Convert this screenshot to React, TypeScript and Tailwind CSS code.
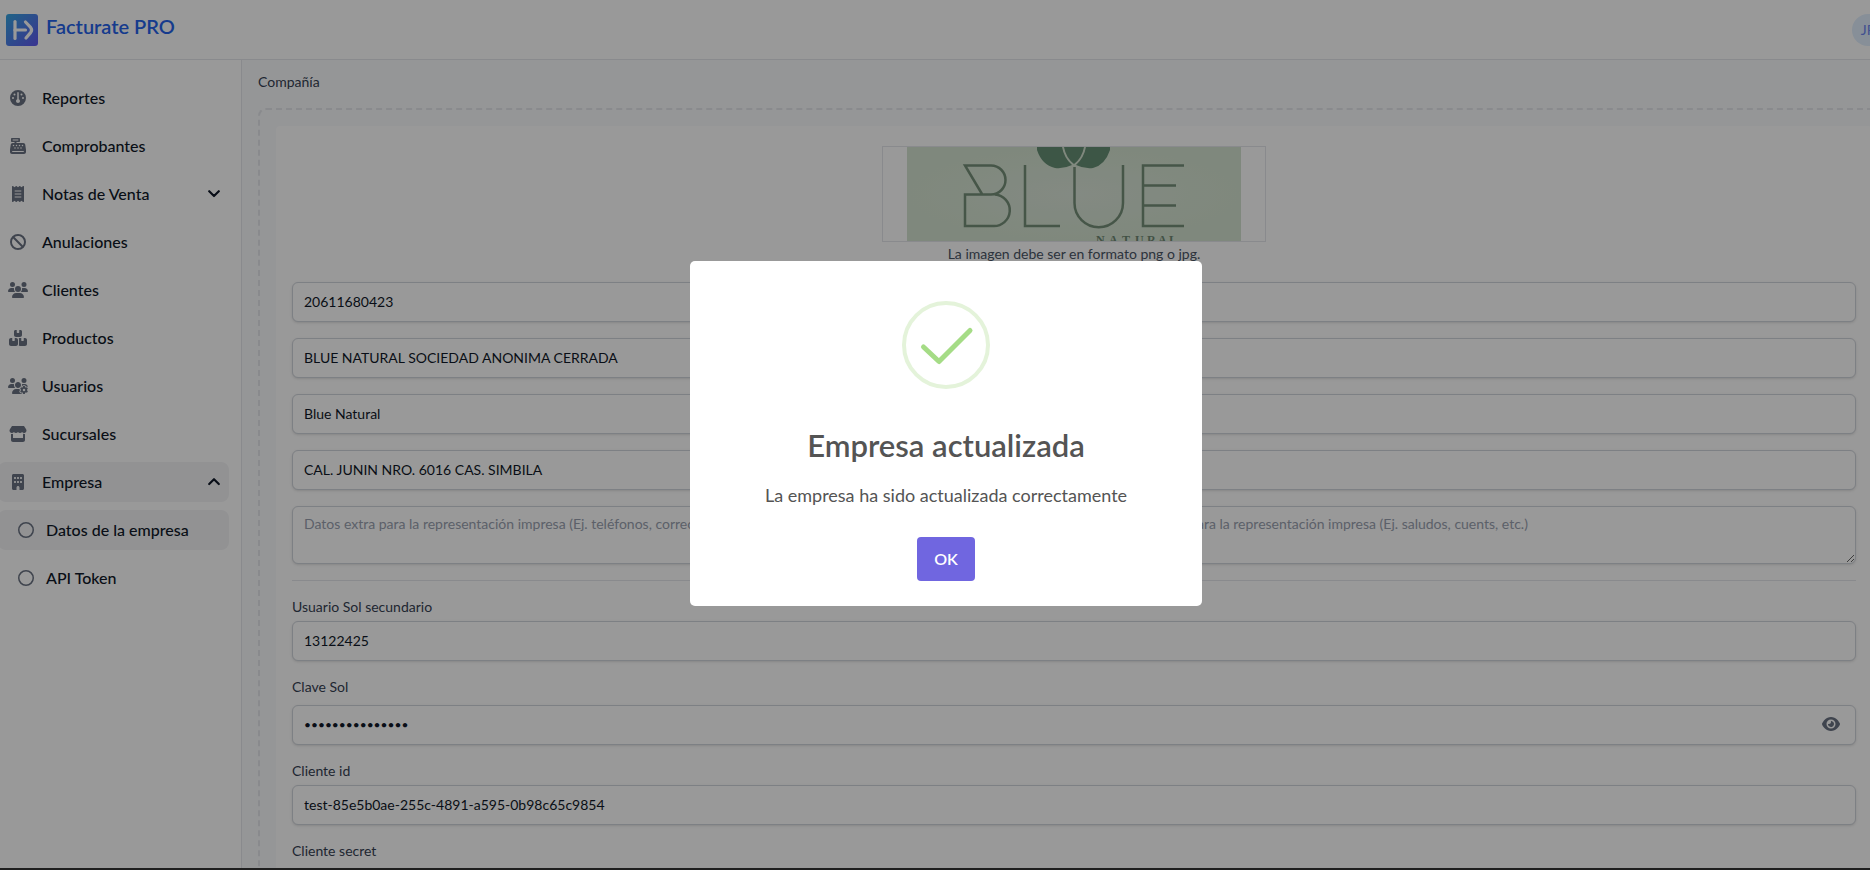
import React from 'react';
import type { ReactNode } from 'react';
import {
  FaBan,
  FaBoxesStacked,
  FaBuilding,
  FaCashRegister,
  FaEye,
  FaGauge,
  FaReceipt,
  FaRegCircle,
  FaStore,
  FaUsers,
  FaUsersGear,
} from 'react-icons/fa6';

type MenuItem = {
  label: string;
  icon: ReactNode;
  chevron?: 'up' | 'down';
  active?: boolean;
  children?: { label: string; active?: boolean }[];
};

const iconClass = 'h-4 w-5 shrink-0 text-gray-500';

const menu: MenuItem[] = [
  { label: 'Reportes', icon: <FaGauge className={iconClass} /> },
  { label: 'Comprobantes', icon: <FaCashRegister className={iconClass} /> },
  { label: 'Notas de Venta', icon: <FaReceipt className={iconClass} />, chevron: 'down' },
  { label: 'Anulaciones', icon: <FaBan className={iconClass} /> },
  { label: 'Clientes', icon: <FaUsers className={iconClass} /> },
  { label: 'Productos', icon: <FaBoxesStacked className={iconClass} /> },
  { label: 'Usuarios', icon: <FaUsersGear className={iconClass} /> },
  { label: 'Sucursales', icon: <FaStore className={iconClass} /> },
  {
    label: 'Empresa',
    icon: <FaBuilding className={iconClass} />,
    chevron: 'up',
    active: true,
    children: [{ label: 'Datos de la empresa', active: true }, { label: 'API Token' }],
  },
];

const boxClass =
  'block w-full rounded-md border border-gray-300 bg-white px-[11px] text-gray-900 shadow-sm placeholder:text-gray-400 focus:outline-none';
const inputClass = `${boxClass} h-10 pb-0.5 text-sm`;
const textareaClass = `${boxClass} h-[58px] pt-[7px] text-sm`;

function BrandMark() {
  return (
    <svg viewBox="0 0 32 32" className="size-8" aria-hidden="true">
      <defs>
        <linearGradient id="brand" x1="0" y1="0" x2="1" y2="1">
          <stop offset="0" stopColor="#35a6e0" />
          <stop offset="1" stopColor="#6257f2" />
        </linearGradient>
      </defs>
      <rect width="32" height="32" rx="3" fill="url(#brand)" />
      <g fill="none" stroke="#fff" strokeWidth="3.2" strokeLinecap="round" strokeLinejoin="round">
        <path d="M9 7.5V24.5" />
        <path d="M9 16H19.5" />
        <path d="M19.5 8L24.6 13.4Q26.6 16 24.6 18.6L20 24" />
      </g>
    </svg>
  );
}

function Chevron({ direction }: { direction: 'up' | 'down' }) {
  return (
    <svg viewBox="0 0 10 6" className="w-3 text-gray-900" fill="none" aria-hidden="true">
      <path
        d={direction === 'down' ? 'M1 1l4 4 4-4' : 'M9 5L5 1 1 5'}
        stroke="currentColor"
        strokeWidth="1.8"
        strokeLinecap="round"
        strokeLinejoin="round"
      />
    </svg>
  );
}

function CompanyLogo() {
  return (
    <svg viewBox="0 0 334 94" className="h-full" role="img" aria-label="Blue Natural">
      <defs>
        <radialGradient id="paper">
          <stop offset="0" stopColor="#dbe6da" />
          <stop offset="1" stopColor="#d4e3d0" />
        </radialGradient>
      </defs>
      <rect width="334" height="94" fill="url(#paper)" />
      <g fill="#668f75">
        <path d="M130 0H155Q157 11 165 18Q157 22 148 21Q135 18 130 3Z" />
        <path d="M157 0H177Q175 11 167 17Q159 11 157 0Z" />
        <path d="M179 0H203V3Q198 18 186 21Q177 22 169 18Q177 11 179 0Z" />
      </g>
      <g fill="none" stroke="#768f79" strokeWidth="2.5">
        <path d="M75 47L58 18.5H84A14.5 14.5 0 0 1 84 47.5H58V79H86A15.7 15.7 0 0 0 88 47.5" />
        <path d="M118 18V79H153" />
        <path d="M167.5 20V56A24.2 24.2 0 0 0 216 56V18" />
        <path d="M277 18.5H236V79H277M236 38.5H269M236 58.5H269" />
      </g>
      <text
        x="189 202 215 228 240 251 262"
        y="97"
        fill="#6f8873"
        className="font-['Liberation_Serif',serif] text-[12px] font-bold"
      >
        NATURAL
      </text>
    </svg>
  );
}

function SuccessIcon() {
  return (
    <svg viewBox="0 0 88 88" className="size-[88px]" aria-hidden="true">
      <circle cx="44" cy="44" r="42" fill="none" stroke="#e4f3da" strokeWidth="4" />
      <path
        d="M21.5 46L37 60.5L68 29.5"
        fill="none"
        stroke="#a5dc86"
        strokeWidth="5"
        strokeLinecap="round"
        strokeLinejoin="round"
      />
    </svg>
  );
}

function Sidebar() {
  return (
    <aside className="w-64 shrink-0 border-r border-gray-200 bg-white px-3 pt-[18px]">
      <ul className="flex flex-col gap-2 text-base font-medium text-gray-900">
        {menu.map((item) => (
          <li key={item.label} className="flex flex-col gap-2">
            <a
              href="#"
              className={`flex h-10 items-center gap-3.5 rounded-lg pr-[9px] pl-2.5 ${item.active ? 'bg-gray-100' : ''}`}
            >
              {item.icon}
              <span className="flex-1">{item.label}</span>
              {item.chevron && <Chevron direction={item.chevron} />}
            </a>
            {item.children && (
              <ul className="flex flex-col gap-2">
                {item.children.map((child) => (
                  <li key={child.label}>
                    <a
                      href="#"
                      className={`flex h-10 items-center gap-3 rounded-lg pr-2 pl-5 ${child.active ? 'bg-gray-100' : ''}`}
                    >
                      <FaRegCircle className="text-gray-500" />
                      {child.label}
                    </a>
                  </li>
                ))}
              </ul>
            )}
          </li>
        ))}
      </ul>
    </aside>
  );
}

function Field({ id, label, value }: { id: string; label: string; value: string }) {
  return (
    <div className="flex flex-col gap-1">
      <label htmlFor={id} className="text-sm text-gray-700">
        {label}
      </label>
      <input id={id} defaultValue={value} className={inputClass} />
    </div>
  );
}

function CompanyForm() {
  return (
    <form className="flex flex-col gap-4 rounded bg-white px-4 pt-5 pb-4">
      <div className="flex flex-col items-center">
        <div className="flex h-24 w-96 justify-center border border-gray-200">
          <CompanyLogo />
        </div>
        <p className="text-sm/6 text-gray-600">La imagen debe ser en formato png o jpg.</p>
      </div>
      <input aria-label="RUC" defaultValue="20611680423" className={inputClass} />
      <input
        aria-label="Razón social"
        defaultValue="BLUE NATURAL SOCIEDAD ANONIMA CERRADA"
        className={inputClass}
      />
      <input aria-label="Nombre comercial" defaultValue="Blue Natural" className={inputClass} />
      <input
        aria-label="Dirección"
        defaultValue="CAL. JUNIN NRO. 6016 CAS. SIMBILA"
        className={inputClass}
      />
      <div className="grid grid-cols-2 gap-4">
        <textarea
          aria-label="Datos extra"
          placeholder="Datos extra para la representación impresa (Ej. teléfonos, correos, etc.)"
          className={textareaClass}
        />
        <textarea
          aria-label="Texto adicional"
          placeholder="Texto adicional para la representación impresa (Ej. saludos, cuents, etc.)"
          className={textareaClass}
        />
      </div>
      <hr className="border-gray-200" />
      <Field id="sol-user" label="Usuario Sol secundario" value="13122425" />
      <div className="flex flex-col gap-2">
        <label htmlFor="sol-key" className="text-sm text-gray-700">
          Clave Sol
        </label>
        <div className="relative">
          <input
            id="sol-key"
            type="password"
            defaultValue="123456789012345"
            className={`${boxClass} h-10 pb-0.5 text-xs`}
          />
          <button
            type="button"
            aria-label="Mostrar clave"
            className="absolute inset-y-0 right-4 flex items-center pb-0.5 text-gray-500"
          >
            <FaEye className="h-4 w-[18px]" />
          </button>
        </div>
      </div>
      <Field id="client-id" label="Cliente id" value="test-85e5b0ae-255c-4891-a595-0b98c65c9854" />
      <div className="flex flex-col gap-2">
        <label htmlFor="client-secret" className="text-sm text-gray-700">
          Cliente secret
        </label>
        <input id="client-secret" className={inputClass} />
      </div>
    </form>
  );
}

export default function App() {
  return (
    <div className="h-screen overflow-hidden bg-white font-['Lato',sans-serif]">
      <div className="-mr-9 -ml-3.5 flex min-h-full flex-col">
        <header className="flex h-[60px] items-center justify-between border-b border-gray-200 bg-white pr-[22px] pl-5">
          <a href="#" className="flex items-center gap-2">
            <BrandMark />
            <span className="pb-2 text-xl font-semibold text-[#2563eb]">Facturate PRO</span>
          </a>
          <button
            type="button"
            className="flex size-8 items-center justify-center rounded-full bg-[#e1effe] text-sm text-[#6b84f0]"
          >
            JP
          </button>
        </header>
        <div className="flex flex-1">
          <Sidebar />
          <main className="flex min-w-0 flex-1 flex-col gap-4 bg-slate-50 px-4 pt-3">
            <h1 className="text-sm text-gray-700">Compañía</h1>
            <div className="rounded-lg border-2 border-dashed border-gray-200 p-4">
              <CompanyForm />
            </div>
          </main>
        </div>
      </div>

      <div className="fixed inset-0 flex items-center justify-center bg-black/40 pb-[3px] pl-[22px]">
        <div
          role="dialog"
          aria-modal="true"
          aria-labelledby="dialog-title"
          className="flex w-lg flex-col items-center rounded-[5px] bg-white pt-10 pb-[25px] text-[#545454]"
        >
          <SuccessIcon />
          <h2 id="dialog-title" className="mt-[38px] text-[31px]/9 font-semibold">
            Empresa actualizada
          </h2>
          <p className="mt-[18px] text-lg">La empresa ha sido actualizada correctamente</p>
          <button
            type="button"
            className="mt-7 h-11 w-[58px] rounded bg-[#7066e0] text-base font-semibold text-white"
          >
            OK
          </button>
        </div>
      </div>
      <div className="fixed inset-x-0 bottom-0 h-0.5 bg-[#1f1f1f]" />
    </div>
  );
}
